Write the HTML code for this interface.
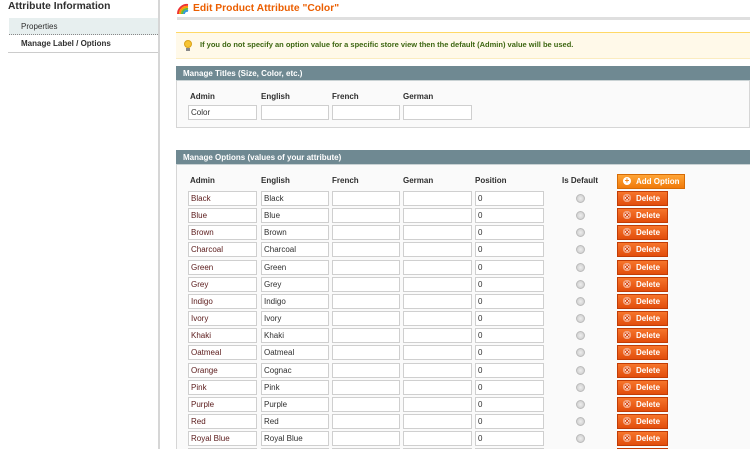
<!DOCTYPE html>
<html><head><style>
*{margin:0;padding:0;box-sizing:border-box}
body{width:750px;height:474px;background:#fff;font-family:"Liberation Sans",Arial,sans-serif;position:relative;overflow:hidden;color:#2f2f2f}
.a{position:absolute}
.in{position:absolute;height:15px;border:1px solid #cfcfcf;background:#fff;font-size:8px;line-height:13px;padding-left:2px;color:#2f2f2f}
.hd{position:absolute;font-size:8px;font-weight:bold;color:#2f2f2f}
.del{position:absolute;left:617px;width:51px;height:15px;background:linear-gradient(#f6752b,#e24d0c);border:1px solid #c23c05;color:#fff;font-size:8px;font-weight:bold;line-height:13px;padding-left:18px}
.del:before{content:"";position:absolute;left:5px;top:2px;width:8px;height:8px;border-radius:50%;background:#fff;box-shadow:inset 0 0 0 2px #f3a07a}
.del:after{content:"×";position:absolute;left:6.5px;top:0;font-size:9px;color:#d5410a;line-height:13px}
.rad{position:absolute;left:576px;width:9px;height:9px;border-radius:50%;background:radial-gradient(#eee,#c8c8c8);border:1px solid #bbb}
</style></head><body>
<div class="a" style="left:8px;top:1px;font-size:10.3px;font-weight:bold;color:#2f2f2f">Attribute Information</div>
<div class="a" style="left:9px;top:18px;width:149px;height:17px;background:#e7efef;border-bottom:1px dotted #888"></div>
<div class="a" style="left:21px;top:22px;font-size:8px;color:#2f2f2f">Properties</div>
<div class="a" style="left:21px;top:39px;font-size:8px;font-weight:bold">Manage Label / Options</div>
<div class="a" style="left:8px;top:52px;width:150px;height:1px;background:#ccc"></div>
<div class="a" style="left:158px;top:0;width:2px;height:449px;background:#d6d6d6"></div>
<svg class="a" style="left:177px;top:3px" width="12" height="11" viewBox="0 0 12 11"><path d="M1 11A9 9 0 0 1 11 2" stroke="#e33" stroke-width="2" fill="none"/><path d="M3 11A7 7 0 0 1 11 4" stroke="#f90" stroke-width="2" fill="none"/><path d="M5 11A5 5 0 0 1 11 6" stroke="#6b3" stroke-width="2" fill="none"/><path d="M7 11A3 3 0 0 1 11 8" stroke="#39d" stroke-width="2" fill="none"/></svg>
<div class="a" style="left:193px;top:3px;font-size:10.3px;font-weight:bold;color:#eb5e00">Edit Product Attribute "Color"</div>
<div class="a" style="left:177px;top:17px;width:573px;height:3px;background:#dfdfdf"></div>
<div class="a" style="left:176px;top:32px;width:574px;height:27px;background:#fff9e9;border-top:1px solid #ffd967;border-bottom:1px solid #fbecc0"></div>
<div class="a" style="left:184px;top:40px;width:8px;height:8px;border-radius:50%;background:#f7c433;border:1px solid #d9a21a"></div>
<div class="a" style="left:186px;top:48px;width:4px;height:3px;background:#888"></div>
<div class="a" style="left:200px;top:40px;font-size:7.5px;font-weight:bold;color:#3d6611">If you do not specify an option value for a specific store view then the default (Admin) value will be used.</div>
<div class="a" style="left:176px;top:66px;width:574px;height:15px;background:#6f8992;border-bottom:1px solid #c9d2d4"></div>
<div class="a" style="left:183px;top:69px;font-size:8px;font-weight:bold;color:#fff">Manage Titles (Size, Color, etc.)</div>
<div class="a" style="left:176px;top:81px;width:574px;height:47px;background:#fafafa;border:1px solid #d6d6d6;border-top:0"></div>
<div class="hd" style="left:190px;top:92px">Admin</div><div class="hd" style="left:261px;top:92px">English</div><div class="hd" style="left:332px;top:92px">French</div><div class="hd" style="left:403px;top:92px">German</div>
<div class="in" style="left:188px;top:105px;width:69px">Color</div><div class="in" style="left:261px;top:105px;width:68px"></div><div class="in" style="left:332px;top:105px;width:68px"></div><div class="in" style="left:403px;top:105px;width:69px"></div>
<div class="a" style="left:176px;top:150px;width:574px;height:15px;background:#6f8992;border-bottom:1px solid #c9d2d4"></div>
<div class="a" style="left:183px;top:153px;font-size:8px;font-weight:bold;color:#fff">Manage Options (values of your attribute)</div>
<div class="a" style="left:176px;top:165px;width:574px;height:284px;background:#fafafa;border-left:1px solid #d6d6d6"></div>
<div class="hd" style="left:190px;top:176px">Admin</div><div class="hd" style="left:261px;top:176px">English</div><div class="hd" style="left:332px;top:176px">French</div><div class="hd" style="left:403px;top:176px">German</div><div class="hd" style="left:475px;top:176px">Position</div><div class="hd" style="left:562px;top:176px">Is Default</div>
<div class="a" style="left:617px;top:174px;width:68px;height:15px;background:linear-gradient(#ffa537,#f07a0a);border:1px solid #d66b05;color:#fff;font-size:8px;font-weight:bold;line-height:13px;padding-left:18px">Add Option</div>
<div class="a" style="left:623px;top:177px;width:8px;height:8px;border-radius:50%;background:#fff;color:#f07a0a;font-size:8px;line-height:8px;text-align:center;font-weight:bold">+</div>
<div id="rows"></div>
<script>
var n=["Black","Blue","Brown","Charcoal","Green","Grey","Indigo","Ivory","Khaki","Oatmeal","Orange","Pink","Purple","Red","Royal Blue",""];
var e=["Black","Blue","Brown","Charcoal","Green","Grey","Indigo","Ivory","Khaki","Oatmeal","Cognac","Pink","Purple","Red","Royal Blue",""];
var h="";
for(var i=0;i<n.length;i++){var y=Math.round(191+i*17.15);
h+='<div class="in" style="left:188px;top:'+y+'px;width:69px;color:#5a1a1a">'+n[i]+'</div>';
h+='<div class="in" style="left:261px;top:'+y+'px;width:68px">'+e[i]+'</div>';
h+='<div class="in" style="left:332px;top:'+y+'px;width:68px"></div>';
h+='<div class="in" style="left:403px;top:'+y+'px;width:69px"></div>';
h+='<div class="in" style="left:475px;top:'+y+'px;width:69px">'+(i<15?'0':'')+'</div>';
h+='<div class="rad" style="top:'+(y+3)+'px"></div>';
h+='<div class="del" style="top:'+y+'px">Delete</div>';}
document.getElementById('rows').innerHTML=h;
</script>
<div class="a" style="left:0;top:449px;width:750px;height:25px;background:#fff"></div>
</body></html>
